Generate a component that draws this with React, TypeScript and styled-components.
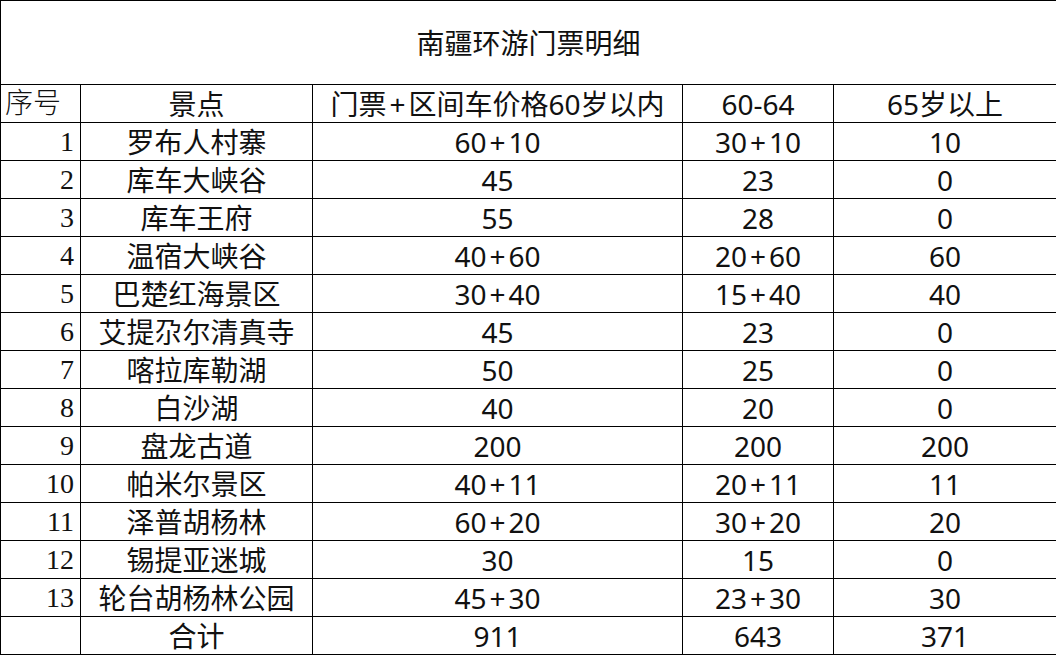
import React from 'react';
import styled, { createGlobalStyle } from 'styled-components';

const GlobalStyle = createGlobalStyle`
  html, body {
    margin: 0;
    padding: 0;
    background: #ffffff;
  }
`;

const Sheet = styled.table`
  width: 1056px;
  border-collapse: collapse;
  table-layout: fixed;
  font-family: 'Noto Sans', 'Noto Sans CJK SC', sans-serif;
  font-size: 28px;
  color: #111;
`;

const TitleCell = styled.td`
  height: 83px;
  border: 1px solid #000;
  text-align: center;
  vertical-align: middle;
  padding: 0;
  line-height: 1;
`;

const Row = styled.tr`
  height: 38px;
`;

const Cell = styled.td<{ $align?: 'left' | 'right' | 'center'; $serif?: boolean }>`
  border: 1px solid #000;
  padding: 0 ${p => (p.$align === 'right' ? '6px' : '0')} 0 ${p => (p.$align === 'left' ? '4px' : '0')};
  text-align: ${p => p.$align || 'center'};
  vertical-align: middle;
  line-height: 1;
  white-space: nowrap;
  overflow: hidden;
  font-family: ${p =>
    p.$serif
      ? "'Liberation Serif', 'Noto Sans CJK SC', serif"
      : "'Noto Sans', 'Noto Sans CJK SC', sans-serif"};
  font-weight: ${p => (p.$serif ? 300 : 400)};
`;

const Plus = styled.span`
  margin: 0 3px;
`;

// splits "60+10" so the plus gets the wider spacing of the original font
const Amount = ({ value }: { value: string }) => {
  const parts = value.split('+');
  return (
    <>
      {parts.map((p, i) => (
        <React.Fragment key={i}>
          {i > 0 && <Plus>+</Plus>}
          {p}
        </React.Fragment>
      ))}
    </>
  );
};

type Spot = { name: string; young: string; mid: string; old: string };

const spots: Spot[] = [
  { name: '罗布人村寨', young: '60+10', mid: '30+10', old: '10' },
  { name: '库车大峡谷', young: '45', mid: '23', old: '0' },
  { name: '库车王府', young: '55', mid: '28', old: '0' },
  { name: '温宿大峡谷', young: '40+60', mid: '20+60', old: '60' },
  { name: '巴楚红海景区', young: '30+40', mid: '15+40', old: '40' },
  { name: '艾提尕尔清真寺', young: '45', mid: '23', old: '0' },
  { name: '喀拉库勒湖', young: '50', mid: '25', old: '0' },
  { name: '白沙湖', young: '40', mid: '20', old: '0' },
  { name: '盘龙古道', young: '200', mid: '200', old: '200' },
  { name: '帕米尔景区', young: '40+11', mid: '20+11', old: '11' },
  { name: '泽普胡杨林', young: '60+20', mid: '30+20', old: '20' },
  { name: '锡提亚迷城', young: '30', mid: '15', old: '0' },
  { name: '轮台胡杨林公园', young: '45+30', mid: '23+30', old: '30' },
];

export default function App() {
  return (
    <>
      <GlobalStyle />
      <Sheet>
        <colgroup>
          <col style={{ width: 80 }} />
          <col style={{ width: 232 }} />
          <col style={{ width: 370 }} />
          <col style={{ width: 151 }} />
          <col style={{ width: 223 }} />
        </colgroup>
        <tbody>
          <tr>
            <TitleCell colSpan={5}>南疆环游门票明细</TitleCell>
          </tr>
          <Row>
            <Cell $align="left" $serif>序号</Cell>
            <Cell>景点</Cell>
            <Cell>门票<Plus>+</Plus>区间车价格60岁以内</Cell>
            <Cell>60-64</Cell>
            <Cell>65岁以上</Cell>
          </Row>
          {spots.map((s, i) => (
            <Row key={s.name}>
              <Cell $align="right" $serif>{i + 1}</Cell>
              <Cell>{s.name}</Cell>
              <Cell><Amount value={s.young} /></Cell>
              <Cell><Amount value={s.mid} /></Cell>
              <Cell>{s.old}</Cell>
            </Row>
          ))}
          <Row>
            <Cell />
            <Cell>合计</Cell>
            <Cell>911</Cell>
            <Cell>643</Cell>
            <Cell>371</Cell>
          </Row>
        </tbody>
      </Sheet>
    </>
  );
}
